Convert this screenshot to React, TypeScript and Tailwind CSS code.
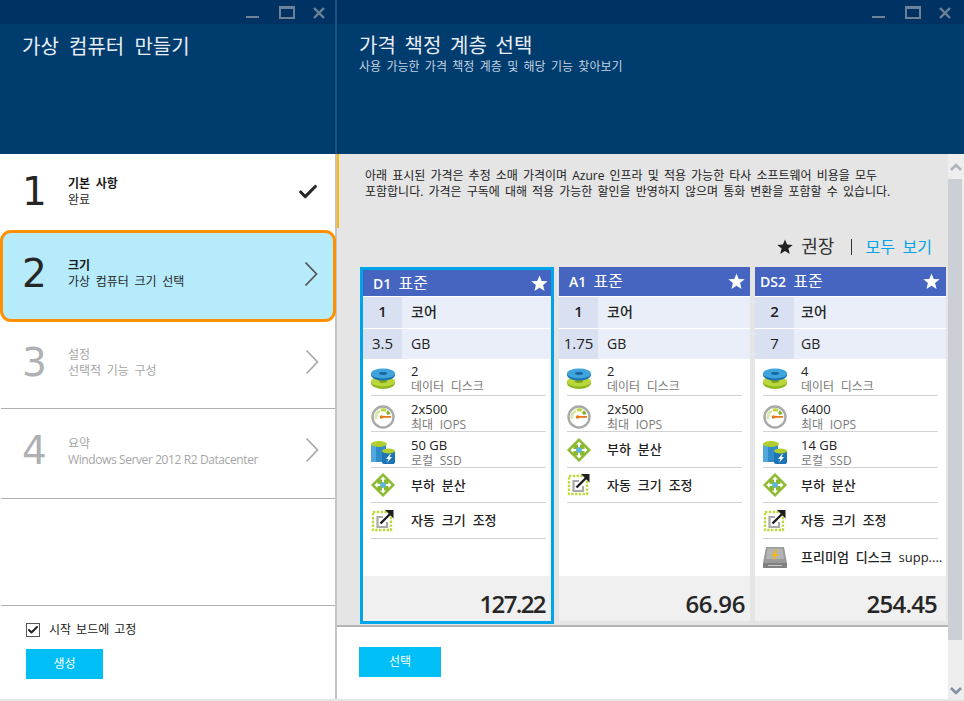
import { Check } from "lucide-react";

const FONT = "font-['Open_Sans','Noto_Sans_CJK_KR',sans-serif]";

function WindowButtons({ right }: { right?: boolean }) {
  return (
    <div className={`h-6 bg-[#003363] flex items-start justify-end ${right ? "pr-[3px]" : ""}`}>
      <svg width="90" height="24" viewBox="0 0 90 24" fill="none">
        <rect x="1" y="16" width="13" height="2" fill="#6d8197" />
        <rect x="35" y="7" width="14" height="11" stroke="#6d8197" strokeWidth="2" />
        <rect x="34" y="6" width="16" height="3" fill="#6d8197" />
        <path d="M69 8l10 10M79 8L69 18" stroke="#6d8197" strokeWidth="2.4" />
      </svg>
    </div>
  );
}

function DiskIcon() {
  return (
    <svg width="24" height="24" viewBox="0 0 24 24" className="shrink-0">
      <ellipse cx="12" cy="16" rx="12" ry="6" fill="#8fb81e" />
      <ellipse cx="12" cy="14.500" rx="12" ry="5" fill="#b9d63a" />
      <ellipse cx="12" cy="14.500" rx="4" ry="1.400" fill="#7fa418" />
      <ellipse cx="12" cy="8" rx="12" ry="5.500" fill="#1a72b0" />
      <ellipse cx="12" cy="6.500" rx="12" ry="5" fill="#3fa3dc" />
      <ellipse cx="12" cy="6.500" rx="4" ry="1.400" fill="#16659f" />
    </svg>
  );
}

function GaugeIcon() {
  return (
    <svg width="24" height="24" viewBox="0 0 24 24" className="shrink-0">
      <circle cx="12" cy="12" r="10.500" fill="#fff" stroke="#a9a9a9" strokeWidth="2.400" />
      <path d="M5 14a7 7 0 0 1 4-8" fill="none" stroke="#d5e6a6" strokeWidth="3" />
      <path d="M10 5.200a7 7 0 0 1 5 .3" fill="none" stroke="#b9d63a" strokeWidth="3" />
      <path d="M16 6.500a7 7 0 0 1 2 3" fill="none" stroke="#7fb321" strokeWidth="3" />
      <rect x="10" y="11" width="10" height="1.800" fill="#e8791b" />
      <circle cx="10.500" cy="12" r="1.800" fill="#e8791b" />
    </svg>
  );
}

function SsdIcon() {
  return (
    <svg width="24" height="24" viewBox="0 0 24 24" className="shrink-0">
      <path d="M0 3h15v18H3q-3 0-3-2z" fill="#2f8cc8" />
      <rect x="0" y="3" width="5" height="18" fill="#52a8dc" />
      <ellipse cx="8" cy="3" rx="8" ry="3" fill="#b0cf2e" />
      <path d="M11 10h13v11q0 2-3 2h-7q-3 0-3-2z" fill="#1b74b4" />
      <ellipse cx="17.500" cy="10" rx="6.500" ry="2.400" fill="#b0cf2e" />
      <path d="M19 13l-4 5h2.500l-1.500 4 5-6h-2.600l1.600-3z" fill="#fff" />
    </svg>
  );
}

function BalanceIcon() {
  return (
    <svg width="24" height="24" viewBox="0 0 24 24" className="shrink-0">
      <path d="M12 0.500L23.500 12 12 23.500 0.500 12z" fill="#8ab92d" stroke="#8ab92d" strokeLinejoin="round" />
      <path d="M12 3.500l3 3h-2v3h-2v-3H9zM12 20.500l3-3h-2v-3h-2v3H9zM3.500 12l3-3v2h3v2h-3v2zM20.500 12l-3-3v2h-3v2h3v2z" fill="#fff" />
      <circle cx="12" cy="12" r="2.800" fill="#5db4e0" />
    </svg>
  );
}

function ScaleIcon() {
  return (
    <svg width="24" height="24" viewBox="0 0 24 24" className="shrink-0">
      <rect x="2" y="3" width="18" height="18" fill="#fff" stroke="#c1d83c" strokeWidth="2.400" strokeDasharray="2.400 1.400" />
      <path d="M12 8H6.500v10H16v-5" fill="none" stroke="#a8a8a8" strokeWidth="2.200" />
      <path d="M9.500 14.500L19 5" stroke="#1f1f1f" strokeWidth="2.400" />
      <path d="M14 1h8.500v8.500z" fill="#1f1f1f" />
    </svg>
  );
}

function PremiumIcon() {
  return (
    <svg width="24" height="24" viewBox="0 0 24 24" className="shrink-0">
      <path d="M3 2h18l3 16H0z" fill="#9a9a9a" />
      <path d="M4.500 3.500h15L21 14H3z" fill="#b4b4b4" />
      <rect x="0" y="18" width="24" height="5" fill="#808080" />
      <rect x="5" y="20" width="14" height="1" fill="#c8c8c8" />
      <path d="M13.500 4L8.500 11h3L10 16l5.500-7h-3l2-5z" fill="#f2b90f" />
    </svg>
  );
}

function Star({ className }: { className: string }) {
  return (
    <svg viewBox="0 0 20 20" className={className}>
      <path d="M10 0.500l2.600 6.500 7 .4-5.400 4.500 1.800 6.800L10 15l-6 3.700 1.800-6.800L.4 7.400l7-.4z" fill="currentColor" />
    </svg>
  );
}

function StepChevron({ off }: { off: boolean }) {
  return (
    <svg
      width="14"
      height="26"
      viewBox="0 0 14 26"
      fill="none"
      className={off ? "text-[#a9acb0] -mt-[3px]" : "text-[#555] -mt-[1px]"}
    >
      <path d="M1.500 1.500L12.500 13 1.500 24.500" stroke="currentColor" strokeWidth="1.800" />
    </svg>
  );
}

type Feature = { icon: React.ReactNode; title: string; sub?: string };

const disk = (n: string): Feature => ({ icon: <DiskIcon />, title: n, sub: "데이터 디스크" });
const iops = (n: string): Feature => ({ icon: <GaugeIcon />, title: n, sub: "최대 IOPS" });
const ssd = (n: string): Feature => ({ icon: <SsdIcon />, title: n, sub: "로컬 SSD" });
const balance: Feature = { icon: <BalanceIcon />, title: "부하 분산" };
const scale: Feature = { icon: <ScaleIcon />, title: "자동 크기 조정" };

const tiers = [
  {
    name: "D1",
    cores: "1",
    gb: "3.5",
    price: "127.22",
    selected: true,
    headCls: "pl-[10px] pr-[3px]",
    labelCls: "pl-[9px]",
    iconCls: "w-[40px]",
    listCls: "pl-[8px] pr-[5px]",
    priceCls: "pr-[6px] tracking-[-1.6px]",
    features: [disk("2"), iops("2x500"), ssd("50 GB"), balance, scale],
  },
  {
    name: "A1",
    cores: "1",
    gb: "1.75",
    price: "66.96",
    selected: false,
    headCls: "pl-[10px] pr-[5px]",
    labelCls: "pl-[9px]",
    iconCls: "w-[40px]",
    listCls: "px-[8px]",
    priceCls: "pr-[5px] tracking-[-0.4px]",
    features: [disk("2"), iops("2x500"), balance, scale],
  },
  {
    name: "DS2",
    cores: "2",
    gb: "7",
    price: "254.45",
    selected: false,
    headCls: "pl-[5px] pr-[6px]",
    labelCls: "pl-[7px]",
    iconCls: "w-[38px]",
    listCls: "px-[8px]",
    priceCls: "pr-[9px] tracking-[-0.8px]",
    features: [
      disk("4"),
      iops("6400"),
      ssd("14 GB"),
      balance,
      scale,
      { icon: <PremiumIcon />, title: "프리미엄 디스크 supp...." },
    ],
  },
];

const steps = [
  { n: "1", title: "기본 사항", sub: "완료", h: "h-[76px]", state: "done" },
  { n: "2", title: "크기", sub: "가상 컴퓨터 크기 선택", h: "h-[92px]", state: "active" },
  { n: "3", title: "설정", sub: "선택적 기능 구성", h: "h-[87px]", state: "off" },
  { n: "4", title: "요약", sub: "Windows Server 2012 R2 Datacenter", h: "h-[90px]", state: "off" },
];

function Step({ step }: { step: (typeof steps)[number] }) {
  const off = step.state === "off";
  const active = step.state === "active";
  return (
    <div
      className={`${step.h} shrink-0 flex items-center [word-spacing:0.16em] ${
        active
          ? "bg-[#b5ebfa] border-[3px] border-[#ff9100] rounded-[11px] -mx-px pl-[19px] pr-[15px] pb-[4px]"
          : "pl-[21px] pr-[16px]"
      } ${off ? "border-b border-[#b0b0b0] pb-[4px]" : ""}`}
    >
      <div
        className={`w-[46px] shrink-0 font-['DejaVu_Sans',sans-serif] text-[39px] leading-none -mt-[2px] ${
          off ? "text-[#aeb0b3]" : "text-[#262626]"
        }`}
      >
        {step.n}
      </div>
      <div className="flex-1 text-[12px] leading-[16px]">
        <div className={off ? "text-[#a6a6a6]" : "font-semibold text-[#1a1a1a]"}>{step.title}</div>
        <div
          className={`${off ? "text-[#a6a6a6]" : "text-[#262626]"} ${
            step.n === "4" ? "tracking-[-0.4px] [word-spacing:0]" : ""
          }`}
        >
          {step.sub}
        </div>
      </div>
      {step.state === "done" ? (
        <Check size={22} strokeWidth={3.4} className="text-[#262626]" />
      ) : (
        <StepChevron off={off} />
      )}
    </div>
  );
}

function TierCard({ tier }: { tier: (typeof tiers)[number] }) {
  return (
    <div
      className={`flex flex-col bg-white ${
        tier.selected ? "w-[194px] h-[357px] border-[3px] border-[#00a4e8]" : "w-[191px] h-[354px]"
      }`}
    >
      <div
        className={`flex items-center justify-between shrink-0 bg-[#4565c1] text-white ${tier.headCls} ${
          tier.selected ? "h-[26px]" : "h-[29px]"
        }`}
      >
        <span className="text-[14px] font-semibold [word-spacing:0]">
          {tier.name}&nbsp; <span className="font-normal text-[16px] leading-none">표준</span>
        </span>
        <Star className="w-[17px] h-[17px]" />
      </div>
      <div className="mt-px h-[31px] flex shrink-0 bg-[#e9eef8] text-[14px] text-[#222]">
        <div className="w-[39px] bg-[#d9e0f2] flex items-center justify-center text-[15px] font-semibold pb-[2px]">
          {tier.cores}
        </div>
        <div className={`${tier.labelCls} flex items-center font-medium pb-[2px]`}>코어</div>
      </div>
      <div className="mt-px h-[30px] flex shrink-0 bg-[#e9eef8] text-[14px] text-[#222]">
        <div className="w-[39px] bg-[#d9e0f2] flex items-center justify-center text-[15px] pb-[1px]">{tier.gb}</div>
        <div className={`${tier.labelCls} flex items-center pb-[1px]`}>GB</div>
      </div>
      <div className={`flex-1 ${tier.listCls}`}>
        {tier.features.map((f, i) => (
          <div
            key={f.title + f.sub}
            className={`flex items-center ${i === 5 ? "" : "border-b border-[#d2d2d2]"} ${
              i === 0
                ? "h-[39px] -mt-[2px] pt-[5px]"
                : i === 3
                  ? "h-[35px]"
                  : f.sub
                    ? "h-[36px] pt-[6px]"
                    : "h-[36px]"
            }`}
          >
            <div className={`${tier.iconCls} shrink-0`}>{f.icon}</div>
            <div className="min-w-0 whitespace-nowrap">
              <div className={`text-[13px] leading-[15px] text-[#222] ${f.sub ? "[word-spacing:0]" : "font-medium"}`}>
                {f.title}
              </div>
              {f.sub && <div className="text-[12px] leading-[15px] text-[#7a7a7a]">{f.sub}</div>}
            </div>
          </div>
        ))}
      </div>
      <div
        className={`h-[45px] shrink-0 bg-[#f0f0f0] flex items-end justify-end text-[24px] leading-[35px] font-semibold text-[#262626] ${tier.priceCls}`}
      >
        {tier.price}
      </div>
    </div>
  );
}

export default function App() {
  return (
    <div className={`${FONT} [word-spacing:0.22em] w-[964px] h-[701px] flex overflow-hidden bg-[#e6e6e6]`}>
      {/* Left blade */}
      <div className="w-[337px] shrink-0 h-[699px] flex flex-col bg-white border-r-2 border-[#c4c4c4]">
        <div className="h-[154px] shrink-0 bg-[#003c6e] -mr-[2px] border-r-2 border-[#1b5182]">
          <WindowButtons />
          <h1 className="pl-[22px] pt-[8px] text-[20px] leading-[30px] text-[#e8eef4] [word-spacing:0.25em]">
            가상 컴퓨터 만들기
          </h1>
        </div>
        <div className="flex-1 flex flex-col pl-px">
          {steps.map((s) => (
            <Step key={s.n} step={s} />
          ))}
          <div className="mt-auto h-[94px] border-t border-[#b0b0b0] pl-[25px] pt-[15px]">
            <label className="flex items-center gap-[9px] text-[12px] text-[#1a1a1a] [word-spacing:0.16em]">
              <span className="w-[14px] h-[14px] border border-[#555] bg-white flex items-center justify-center">
                <Check size={12} strokeWidth={4} className="text-[#222]" />
              </span>
              시작 보드에 고정
            </label>
            <button className="mt-[10px] w-[77px] h-[30px] bg-[#00bef6] text-white text-[12px]">생성</button>
          </div>
        </div>
      </div>

      {/* Right blade */}
      <div className="flex-1 h-[699px] flex flex-col">
        <div className="h-[154px] shrink-0 bg-[#003c6e]">
          <WindowButtons right />
          <h2 className="pl-[22px] pt-[7px] text-[20px] leading-[29px] text-[#e8eef4]">가격 책정 계층 선택</h2>
          <p className="pl-[22px] text-[12px] leading-[14px] text-[#c3d3e2] [word-spacing:0.185em]">
            사용 가능한 가격 책정 계층 및 해당 기능 찾아보기
          </p>
        </div>
        <div className="flex-1 flex min-h-0">
          <div className="flex-1 flex flex-col min-w-0">
            <div className="h-[473px] shrink-0 bg-[#e5e5e5] border-b-2 border-[#b4b4b4]">
              <div className="h-[74px] border-l-[2px] border-[#ffb900] pl-[26px] pt-[14px] text-[12px] leading-[16px] text-[#222] [word-spacing:0.165em]">
                아래 표시된 가격은 추정 소매 가격이며 Azure 인프라 및 적용 가능한 타사 소프트웨어 비용을 모두
                <br />
                포함합니다. 가격은 구독에 대해 적용 가능한 할인을 반영하지 않으며 통화 변환을 포함할 수 있습니다.
              </div>
              <div className="h-[39px] flex items-center justify-end pr-[16px] pb-[2px] text-[16px]">
                <Star className="w-[16px] h-[16px] text-[#222] mr-[8px]" />
                <span className="text-[#333] text-[18px]">권장</span>
                <span className="ml-[17px] mr-[13px] w-px h-[16px] bg-[#333]" />
                <span className="text-[#00a4e8]">모두 보기</span>
              </div>
              <div className="pl-[23px] flex gap-[5px] items-start">
                {tiers.map((t) => (
                  <TierCard key={t.name} tier={t} />
                ))}
              </div>
            </div>
            <div className="flex-1 bg-white pl-[22px] pt-[20px]">
              <button className="w-[82px] h-[30px] bg-[#00bef6] text-white text-[12px]">선택</button>
            </div>
          </div>
          {/* Scrollbar */}
          <div className="w-[16px] shrink-0 bg-[#eeeeee] flex flex-col">
            <div className="h-[25px] shrink-0 flex items-center justify-center">
              <svg width="12" height="8" viewBox="0 0 12 8" fill="none">
                <path d="M1 7l5-5 5 5" stroke="#aeb4bf" strokeWidth="2.600" />
              </svg>
            </div>
            <div className="h-[461px] w-[14px] shrink-0 bg-[#cdcfd6]" />
            <div className="flex-1 flex items-end justify-center pb-[4px]">
              <svg width="12" height="8" viewBox="0 0 12 8" fill="none">
                <path d="M1 1l5 5 5-5" stroke="#7f8ea3" strokeWidth="2.600" />
              </svg>
            </div>
          </div>
        </div>
      </div>
    </div>
  );
}
